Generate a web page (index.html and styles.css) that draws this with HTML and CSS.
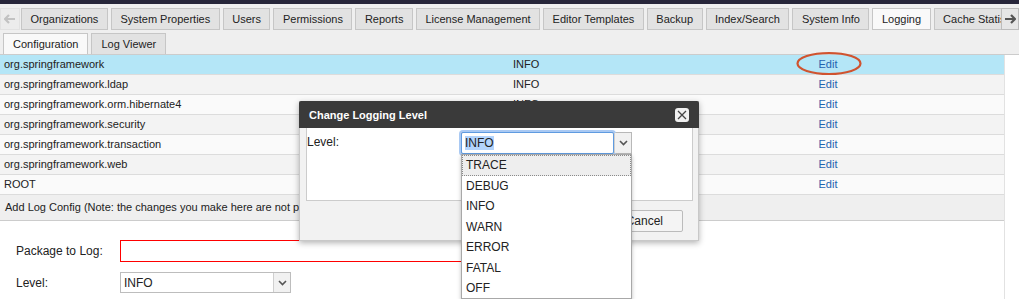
FILE: index.html
```html
<!DOCTYPE html>
<html lang="en">
    <head>
        <meta charset="UTF-8" />
        <title>Logging</title>
        <link rel="stylesheet" href="styles.css">
    </head>
    <body>
        <div class="topband"></div>
        <div class="tabbar">
            <div class="scroll-btn back">
                <svg width="12" height="10" viewBox="0 0 12 10"><path d="M5 1 L1 5 L5 9 M1 5 H11" fill="none" stroke="#c2c2c2" stroke-width="2.2"/></svg>
            </div>
            <div class="tabs">
                <div class="tab">Organizations</div>
                <div class="tab">System Properties</div>
                <div class="tab">Users</div>
                <div class="tab">Permissions</div>
                <div class="tab">Reports</div>
                <div class="tab">License Management</div>
                <div class="tab">Editor Templates</div>
                <div class="tab">Backup</div>
                <div class="tab">Index/Search</div>
                <div class="tab">System Info</div>
                <div class="tab active">Logging</div>
                <div class="tab">Cache Statistics</div>
            </div>
            <div class="scroll-btn next">
                <svg width="12" height="10" viewBox="0 0 12 10"><path d="M7 1 L11 5 L7 9 M11 5 H1" fill="none" stroke="#555" stroke-width="2.2"/></svg>
            </div>
        </div>
        <div class="subtabs">
            <div class="tab active">Configuration</div>
            <div class="tab">Log Viewer</div>
        </div>
        <div class="content">
            <div class="panel">
                <div class="rows">
                    <div class="row selected"><span class="name">org.springframework</span><span class="level">INFO</span><span class="edit"><a>Edit</a></span></div>
                    <div class="row"><span class="name">org.springframework.ldap</span><span class="level">INFO</span><span class="edit"><a>Edit</a></span></div>
                    <div class="row"><span class="name">org.springframework.orm.hibernate4</span><span class="level">INFO</span><span class="edit"><a>Edit</a></span></div>
                    <div class="row"><span class="name">org.springframework.security</span><span class="level">INFO</span><span class="edit"><a>Edit</a></span></div>
                    <div class="row"><span class="name">org.springframework.transaction</span><span class="level">INFO</span><span class="edit"><a>Edit</a></span></div>
                    <div class="row"><span class="name">org.springframework.web</span><span class="level">INFO</span><span class="edit"><a>Edit</a></span></div>
                    <div class="row"><span class="name">ROOT</span><span class="level">INFO</span><span class="edit"><a>Edit</a></span></div>
                </div>
                <div class="add-bar">Add Log Config (Note: the changes you make here are not persisted across restarts)</div>
                <div class="form">
                    <label>Package to Log:</label>
                    <input class="pkg" type="text" />
                    <label>Level:</label>
                    <div class="select small">
                        <span class="value">INFO</span>
                        <span class="arrow"><svg width="9" height="6" viewBox="0 0 9 6"><path d="M1 1 L4.5 4.5 L8 1" fill="none" stroke="#555" stroke-width="1.6"/></svg></span>
                    </div>
                </div>
            </div>
            <div class="side"></div>
        </div>

        <svg class="mark" width="68" height="26" viewBox="0 0 68 26"><ellipse cx="34" cy="12.5" rx="31.5" ry="10.5" fill="none" stroke="#d0532f" stroke-width="2.2"/></svg>

        <div class="dialog">
            <div class="dialog-title">
                <span>Change Logging Level</span>
                <span class="close">
                    <svg width="10" height="10" viewBox="0 0 10 10"><path d="M1 1 L9 9 M9 1 L1 9" stroke="#444" stroke-width="1.3"/></svg>
                </span>
            </div>
            <div class="dialog-body">
                <div class="field">
                    <span class="label">Level:</span>
                    <div class="select focused">
                        <span class="value"><span class="sel">INFO</span></span>
                        <span class="arrow"><svg width="9" height="6" viewBox="0 0 9 6"><path d="M1 1 L4.5 4.5 L8 1" fill="none" stroke="#555" stroke-width="1.6"/></svg></span>
                    </div>
                </div>
            </div>
            <div class="dialog-buttons">
                <button>Save</button>
                <button>Cancel</button>
            </div>
        </div>

        <ul class="dropdown">
            <li class="hover">TRACE</li>
            <li>DEBUG</li>
            <li>INFO</li>
            <li>WARN</li>
            <li>ERROR</li>
            <li>FATAL</li>
            <li>OFF</li>
        </ul>
    </body>
</html>
```

FILE: styles.css
```css
* {
    margin: 0;
    padding: 0;
    box-sizing: border-box;
}

body {
    position: relative;
    width: 1019px;
    height: 299px;
    overflow: hidden;
    font-family: "Liberation Sans", Arial, sans-serif;
    font-size: 11px;
    color: #222;
    background-color: #ffffff;
}

.topband {
    height: 4px;
    background-color: #27263a;
}

/* main tabs */

.tabbar {
    display: flex;
    height: 26px;
    padding-top: 4px;
    background-color: #efefef;
}

.tabs {
    display: flex;
    flex: 1;
    gap: 3px;
    overflow: hidden;
}

.tab {
    flex-shrink: 0;
    height: 22px;
    padding: 0 8.5px;
    line-height: 20px;
    white-space: nowrap;
    border: 1px solid #c6c6c6;
    background-color: #e2e2e2;
}

.tab.active {
    background-color: #f9f9f9;
}

.scroll-btn {
    display: flex;
    justify-content: center;
    align-items: center;
    flex-shrink: 0;
    height: 22px;
    border: 1px solid #d0d0d0;
}

.scroll-btn.back {
    width: 20px;
    margin-right: 1px;
    border-color: #e2e2e2;
    background-color: #ececec;
}

.scroll-btn.next {
    width: 18px;
    background-color: #e6e6e6;
    border-color: #bcbcbc;
}

.subtabs {
    display: flex;
    gap: 3px;
    height: 25px;
    padding: 3px 0 0 3px;
    background-color: #efefef;
    border-bottom: 1px solid #cccccc;
}

.subtabs .tab {
    height: 21px;
    padding: 0 9px;
    border-bottom: none;
}

/* logger table */

.content {
    display: flex;
    height: 244px;
}

.panel {
    width: 1004px;
}

.side {
    flex: 1;
    border-left: 1px solid #e2e2e2;
    background-color: #ffffff;
}

.row {
    display: flex;
    height: 20px;
    line-height: 19px;
    border-bottom: 1px solid #dcdcdc;
    background-color: #f3f3f3;
}

.row:nth-child(odd) {
    background-color: #fafafa;
}

.row.selected {
    background-color: #b4e6f7;
}

.row .name {
    width: 508px;
    padding-left: 4px;
}

.row .level {
    width: 144px;
    padding-left: 5px;
}

.row .edit {
    flex: 1;
    text-align: center;
}

.row .edit a {
    color: #1f63b0;
}

.add-bar {
    height: 26px;
    padding-left: 5px;
    line-height: 25px;
    white-space: nowrap;
    background-color: #efefef;
    border-bottom: 1px solid #cccccc;
}

.form {
    display: grid;
    grid-template-columns: 104px 400px;
    row-gap: 10px;
    align-items: center;
    padding: 19px 0 0 16px;
    font-size: 12px;
}

.form .pkg {
    height: 22px;
    border: 1px solid #ff0000;
    outline: none;
}

/* select boxes */

.select {
    display: flex;
    height: 22px;
    font-size: 12px;
    border: 1px solid #bdbdbd;
    background-color: #ffffff;
}

.select .value {
    flex: 1;
    padding-left: 3px;
    line-height: 20px;
}

.select .arrow {
    display: flex;
    justify-content: center;
    align-items: center;
    width: 17px;
    border-left: 1px solid #cfcfcf;
    background-color: #f1f1f1;
}

.select.small {
    width: 171px;
    height: 21px;
}

.select.focused {
    width: 171px;
    border-color: #b8b8b8;
}

.select.focused .value {
    border: 1px solid #5f9be0;
    border-radius: 2px;
    box-shadow: 0 0 0 2px #a9c9f3;
    margin: -1px 0 -1px -1px;
    padding-left: 3px;
}

.select.focused .sel {
    background-color: #b3d4fc;
}

/* dialog */

.mark {
    position: absolute;
    left: 795px;
    top: 51px;
}

.dialog {
    position: absolute;
    left: 299px;
    top: 101px;
    width: 400px;
    height: 140px;
    background-color: #f2f2f2;
    border: 1px solid #c8c8c8;
    box-shadow: 0 2px 6px rgb(0 0 0 / 30%);
}

.dialog-title {
    display: flex;
    justify-content: space-between;
    align-items: center;
    height: 27px;
    margin: -1px -1px 0 -1px;
    padding: 0 10px 0 10px;
    font-weight: bold;
    color: #ffffff;
    background-color: #3a3a3a;
    border-radius: 2px 2px 0 0;
}

.dialog-title .close {
    display: flex;
    justify-content: center;
    align-items: center;
    width: 14px;
    height: 14px;
    border-radius: 3px;
    background-color: #f0f0f0;
}

.dialog-body {
    height: 73px;
    margin: 0 5px 0 6px;
    background-color: #ffffff;
    border: 1px solid #cccccc;
    border-top: none;
}

.field {
    display: flex;
    padding-top: 4px;
}

.field .label {
    width: 154px;
    padding-top: 3px;
    font-size: 12px;
}

.dialog-buttons {
    display: flex;
    justify-content: flex-end;
    gap: 6px;
    padding: 9px 15px 0 0;
}

.dialog-buttons button {
    height: 22px;
    padding: 0 19px;
    font-family: "Liberation Sans", Arial, sans-serif;
    font-size: 12px;
    color: #222;
    background-color: #f4f4f4;
    border: 1px solid #bbbbbb;
    border-radius: 2px;
}

.dropdown {
    position: absolute;
    left: 461px;
    top: 154px;
    width: 171px;
    height: 145px;
    list-style: none;
    font-size: 12px;
    background-color: #ffffff;
    border: 1px solid #a8a8a8;
    box-shadow: 0 2px 4px rgb(0 0 0 / 25%);
}

.dropdown li {
    height: 20.5px;
    padding-left: 4px;
    line-height: 20.5px;
}

.dropdown li.hover {
    background-color: #eeeeee;
    outline: 1px dotted #8a8a8a;
    outline-offset: -1px;
}
```
